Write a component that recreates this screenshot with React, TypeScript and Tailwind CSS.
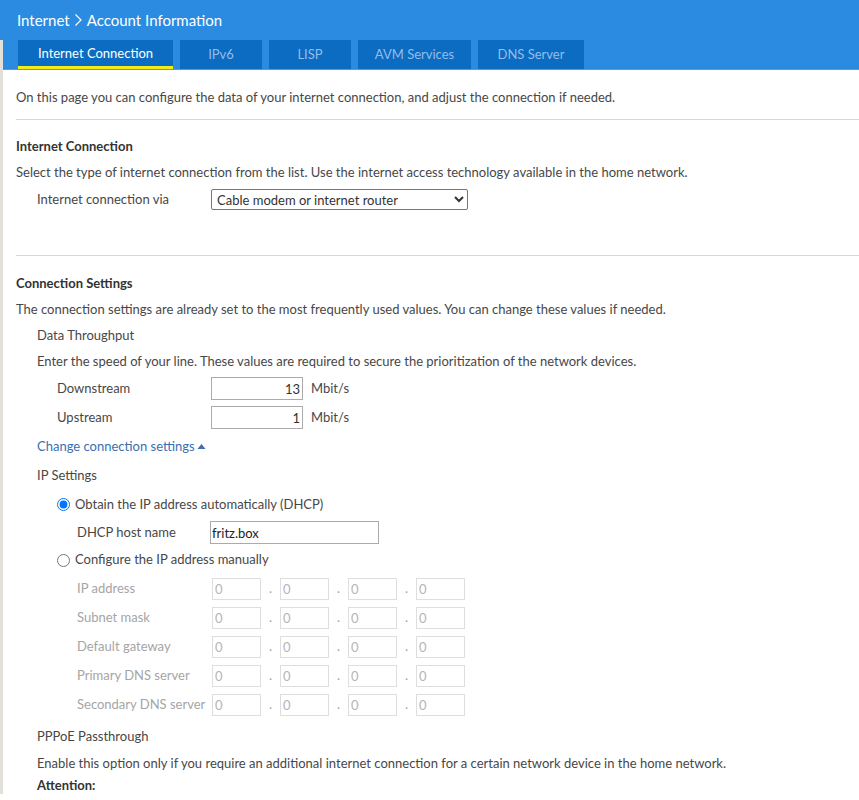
import React from 'react';

const tabs = ['Internet Connection', 'IPv6', 'LISP', 'AVM Services', 'DNS Server'];
const tabWidths = ['w-[155px]', 'w-[82px]', 'w-[82px]', 'w-[113px]', 'w-[106px]'];

const ipRows = ['IP address', 'Subnet mask', 'Default gateway', 'Primary DNS server', 'Secondary DNS server'];

function IpInput() {
    return (
        <input
            disabled
            defaultValue="0"
            className="h-[22px] w-[49px] border border-[#dedede] bg-white px-[2px] text-[13px] text-[#b5b5b5]"
        />
    );
}

export default function App() {
    return (
        <div className="min-h-[800px] w-full bg-white font-['Lato',sans-serif] text-[13px] text-[#474747]">
            {/* Title */}
            <div className="flex h-[40px] items-center bg-[#2a8be0] px-[17px] text-[15px] text-white">
                Internet
                <svg width="9" height="14" viewBox="0 0 9 14" className="mx-[4px]">
                    <path d="M1.5 1.5 L7 7 L1.5 12.5" fill="none" stroke="white" strokeWidth="1.2" />
                </svg>
                Account Information
            </div>

            <div className="border-l-[3px] border-[#e3e0d9]">
                {/* Tabs */}
                <div className="flex h-[30px] gap-[7px] border-b border-[#4a9de6] bg-[#2a8be0] pl-[15px]">
                    {tabs.map((t, i) => (
                        <div
                            key={t}
                            className={`${tabWidths[i]} flex items-center justify-center bg-[#0b6cc2] text-[13px] ${i === 0 ? 'border-b-[3px] border-[#f3ea1a] pt-[2px] text-white' : 'text-[#94bde8]'}`}
                        >
                            {t}
                        </div>
                    ))}
                </div>

                <div className="pl-[13px]">
                    <p className="mt-[14px] leading-[26px]">
                        On this page you can configure the data of your internet connection, and adjust the connection if needed.
                    </p>
                    <div className="mt-[9px] border-t border-[#d8d8d8]" />

                    {/* Internet Connection */}
                    <h2 className="mt-[13px] font-bold leading-[26px] text-[#333]">Internet Connection</h2>
                    <p className="leading-[27px]">
                        Select the type of internet connection from the list. Use the internet access technology available in the home network.
                    </p>
                    <div className="flex h-[27px] items-center pl-[21px]">
                        <span className="w-[174px]">Internet connection via</span>
                        <select className="h-[21px] w-[257px] rounded-[2px] border border-[#767676] bg-white pl-[1px] text-[13px] text-[#333]">
                            <option>Cable modem or internet router</option>
                        </select>
                    </div>

                    <div className="mt-[42px] border-t border-[#d8d8d8]" />

                    {/* Connection Settings */}
                    <h2 className="mt-[14px] font-bold leading-[26px] text-[#333]">Connection Settings</h2>
                    <p className="leading-[26px]">
                        The connection settings are already set to the most frequently used values. You can change these values if needed.
                    </p>
                    <div className="pl-[21px]">
                        <p className="leading-[26px]">Data Throughput</p>
                        <p className="leading-[26px]">
                            Enter the speed of your line. These values are required to secure the prioritization of the network devices.
                        </p>
                        <div className="pl-[20px]">
                            {[
                                ['Downstream', '13'],
                                ['Upstream', '1'],
                            ].map(([label, v]) => (
                                <div key={label} className="flex h-[29px] items-center">
                                    <span className="w-[154px]">{label}</span>
                                    <input
                                        defaultValue={v}
                                        className="h-[23px] w-[92px] border border-[#ababab] bg-white px-[2px] text-right text-[13px] text-[#333]"
                                    />
                                    <span className="ml-[8px]">Mbit/s</span>
                                </div>
                            ))}
                        </div>

                        <div className="flex h-[29px] items-center text-[#3a6fb0]">
                            Change connection settings
                            <svg width="9" height="7" viewBox="0 0 9 7" className="ml-[2px]">
                                <path d="M0.5 6 L4.5 1 L8.5 6 Z" fill="#3a6fb0" />
                            </svg>
                        </div>

                        <p className="leading-[29px]">IP Settings</p>

                        <div className="pl-[20px]">
                            <label className="flex h-[29px] items-center gap-[5px]">
                                <input type="radio" name="ip" defaultChecked className="m-0 h-[13px] w-[13px]" />
                                Obtain the IP address automatically (DHCP)
                            </label>
                            <div className="flex h-[27px] items-center pl-[20px]">
                                <span className="w-[133px]">DHCP host name</span>
                                <input
                                    defaultValue="fritz.box"
                                    className="h-[23px] w-[169px] border border-[#ababab] bg-white px-[1px] text-[13px] text-[#222]"
                                />
                            </div>
                            <label className="flex h-[28px] items-center gap-[5px]">
                                <input type="radio" name="ip" className="m-0 h-[13px] w-[13px]" />
                                Configure the IP address manually
                            </label>

                            <div className="pl-[20px] text-[#a5a5a5]">
                                {ipRows.map((r) => (
                                    <div key={r} className="flex h-[29px] items-center">
                                        <span className="w-[135px] whitespace-nowrap">{r}</span>
                                        <IpInput />
                                        <span className="w-[19px] text-center">.</span>
                                        <IpInput />
                                        <span className="w-[19px] text-center">.</span>
                                        <IpInput />
                                        <span className="w-[19px] text-center">.</span>
                                        <IpInput />
                                    </div>
                                ))}
                            </div>
                        </div>

                        <p className="mt-[3px] leading-[28px]">PPPoE Passthrough</p>
                        <p className="leading-[26px]">
                            Enable this option only if you require an additional internet connection for a certain network device in the home network.
                        </p>
                        <p className="font-bold leading-[18px] text-[#333]">Attention:</p>
                    </div>
                </div>
            </div>
        </div>
    );
}
